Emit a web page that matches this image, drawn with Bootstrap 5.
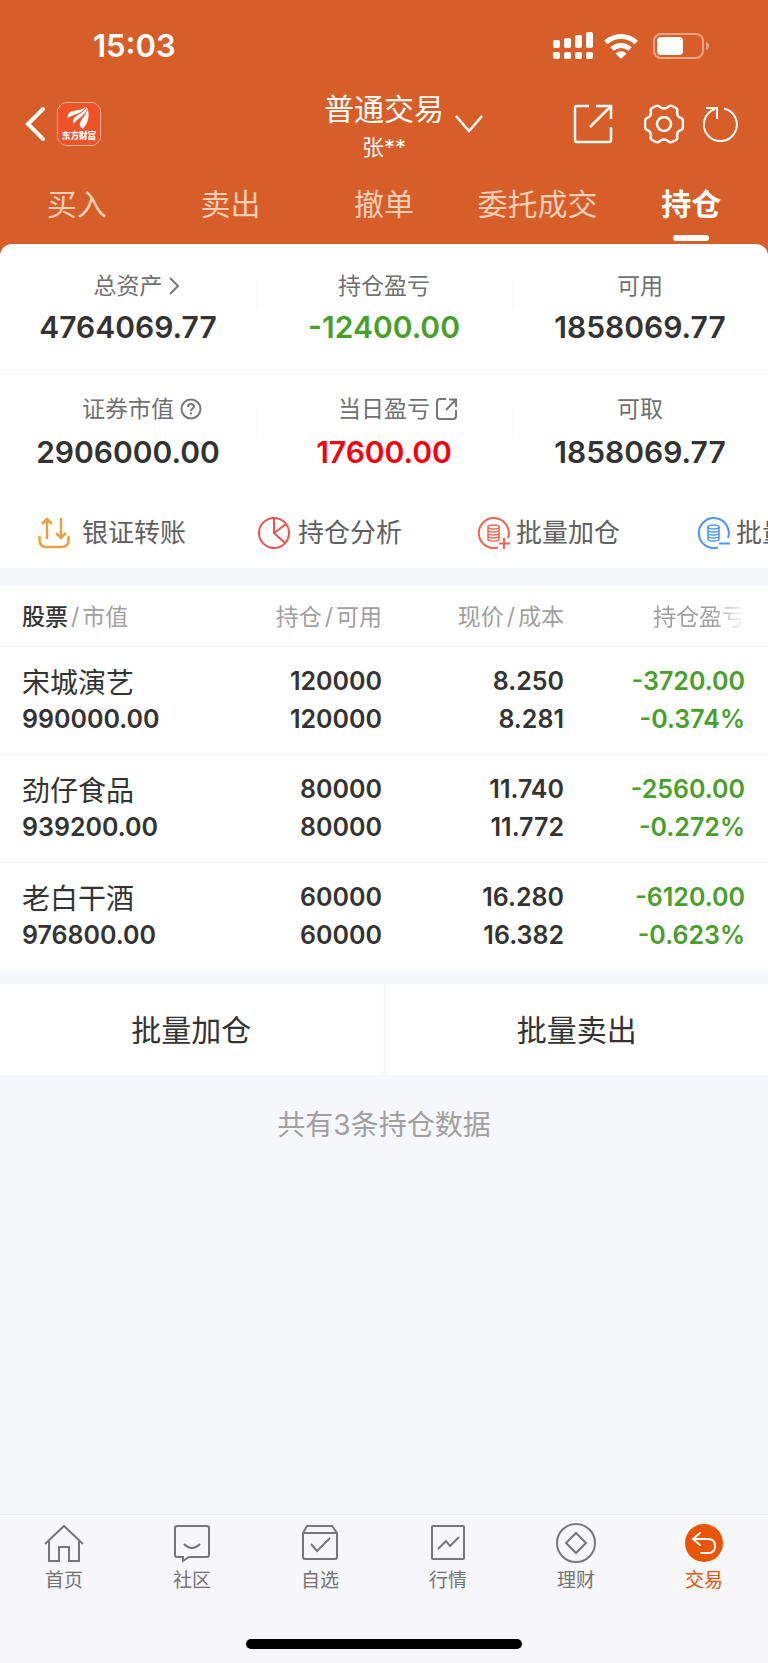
<!DOCTYPE html>
<html lang="zh-CN">
<head>
<meta charset="utf-8">
<meta name="viewport" content="width=device-width, initial-scale=1">
<title>普通交易 - 持仓</title>
<link href="https://cdn.jsdelivr.net/npm/bootstrap@5.3.0/dist/css/bootstrap.min.css" rel="stylesheet">
<style>
  :root { --brand: #d75e28; --page: #f6f7fa; --ink: #333; --line: #f5f5f7; --up: #f6000f; --down: #489f2c; }
  body { background: var(--page); color: var(--ink); font-family: Inter, "Noto Sans CJK SC", sans-serif; }
  svg { display: block; flex: none; }
  a { color: inherit; text-decoration: none; }
  button { color: inherit; background: none; border: 0; padding: 0; }

  .top-area { background: var(--brand); color: #fff; }
  .status-row { height: 90px; padding: 2px 59px 0 93px; }
  .clock { font-size: 31px; font-weight: 600; line-height: 40px; }
  .wifi { margin: 0 14px 0 6px; }
  .title-row { display: grid; grid-template-columns: 1fr auto 1fr; align-items: start; }
  .side-tools { height: 68px; }
  .back-btn { margin: 0 11px 0 24px; }
  .gear-btn { margin: 0 19px 0 31px; }
  .reload-btn { margin-right: 29px; }
  .title-main { font-size: 30px; line-height: 38px; }
  .title-sub { font-size: 22px; line-height: 38px; }
  .app-logo { border: 1px solid #f3b39b; border-radius: 10px; overflow: hidden; }
  .app-logo text { font: 900 9px "Noto Sans CJK SC", sans-serif; }
  .tab-link { padding-top: 18px; font-size: 30px; line-height: 40px; color: #f6cfb9; }
  .tab-link::after { content: ""; display: block; width: 36px; height: 6px; margin: 11px auto 3px; border-radius: 3px; }
  .tab-link.active { color: #fff; font-weight: 700; }
  .tab-link.active::after { background: #fff; }

  .sheet-wrap { background: var(--brand); }
  .sheet { background: #fff; border-radius: 12px 12px 0 0; padding-bottom: 15px; }
  .stat { padding-top: 26px; padding-bottom: 23px; background: no-repeat left 36px / 1px 28px; }
  .stat + .stat { background-image: linear-gradient(var(--line), var(--line)); }
  .stat-label { font-size: 23px; line-height: 32px; color: #707070; }
  .stat-value { font-size: 30px; line-height: 40px; font-weight: 600; margin-top: 5px; }
  .hang-icon { width: 28px; margin-right: -28px; padding-left: 6px; }
  .stats-first { border-bottom: 1px solid var(--line); }
  .stats-second .stat { padding-top: 22px; padding-bottom: 41px; }
  .stats-second .stat-value { margin-top: 7px; }
  .num-up { color: var(--up); }
  .num-down { color: var(--down); }

  .quick { padding-left: 38px; overflow: hidden; }
  .quick button { flex: 0 0 220px; font-size: 26px; line-height: 40px; color: #606060; white-space: nowrap; }
  .coin-icon { margin-right: 6px; }

  .hold { background: #fff; margin-top: 18px; table-layout: fixed; }
  .hold .col-stock { width: 26%; }
  .hold .col-price { width: 182px; }
  .hold .col-gain { width: 204px; }
  .hold th { font-size: 23px; line-height: 36px; font-weight: 400; color: #a0a0a0; padding: 13px 0 11px; white-space: nowrap; }
  .hold td { font-size: 25px; line-height: 38px; font-weight: 600; padding: 15px 0 16px; }
  .hold tr { border-bottom: 1px solid #f2f3f6; }
  .hold tbody tr:last-child { border-bottom: 0; }
  .hold th:first-child, .hold td:first-child { padding-left: 22px; }
  .hold th:last-child, .hold td:last-child { padding-right: 23px; }
  .hold .stock { font-size: 28px; font-weight: 400; line-height: 34px; padding-top: 4px; }
  .hold i { font-style: normal; padding: 0 3px; }
  .sort-key { color: var(--ink); font-weight: 500; }
  .fade-end { -webkit-mask-image: linear-gradient(90deg, #000 66%, transparent); mask-image: linear-gradient(90deg, #000 66%, transparent); }

  .batch { margin-top: 14px; gap: 3px; }
  .batch button { background: #fff; height: 91px; font-size: 30px; line-height: 40px; }
  .count-note { margin-top: 30px; font-size: 28px; line-height: 40px; color: #a0a0a0; }

  .dock { background: #f7f7fa; border-top: 1px solid #ededf0; padding-top: 8px; }
  .dock a { font-size: 19px; line-height: 28px; color: #737373; }
  .dock svg { margin: 0 auto 4px; }
  .dock a.active { color: #ea5504; }
  .home-bar { width: 36%; height: 10px; border-radius: 5px; background: #000; margin: 44px auto 14px; }
</style>
</head>
<body class="d-flex flex-column min-vh-100">

<header class="top-area">
  <div class="status-row d-flex align-items-center">
    <span class="clock me-auto">15:03</span>
    <svg width="40" height="28" viewBox="0 0 40 28" fill="#fff" aria-hidden="true">
      <rect x="0" y="20" width="7" height="7" rx="2"/><rect x="11" y="20" width="7" height="7" rx="2"/><rect x="22" y="20" width="7" height="7" rx="2"/><rect x="33" y="20" width="7" height="7" rx="2"/>
      <rect x="0" y="8" width="7" height="8" rx="2"/><rect x="11" y="6" width="7" height="10" rx="2"/><rect x="22" y="3" width="7" height="13" rx="2"/><rect x="33" y="0" width="7" height="16" rx="2"/>
    </svg>
    <svg class="wifi" width="40" height="26" viewBox="-5 0 40 26" fill="none" stroke="#fff" stroke-width="5" aria-hidden="true">
      <path d="M1.800 9.500a22 22 0 0 1 30.400 0"/><path d="M8 16a13 13 0 0 1 18 0"/><path d="M17 26l-5.500-5.500a8 8 0 0 1 11 0z" fill="#fff" stroke="none"/>
    </svg>
    <svg width="56" height="26" viewBox="0 0 56 26" aria-hidden="true">
      <rect x="1" y="1" width="49" height="24" rx="7" fill="none" stroke="#e9a583" stroke-width="2"/>
      <rect x="4" y="4" width="26" height="18" rx="4" fill="#fff"/><path d="M53 9q3 1 3 4t-3 4z" fill="#e9a583"/>
    </svg>
  </div>

  <div class="title-row">
    <div class="side-tools d-flex align-items-center">
      <button type="button" class="back-btn" aria-label="返回"><svg width="22" height="36" viewBox="0 0 22 36" fill="none" stroke="#fff" stroke-width="4"><path d="M19 3L4 18l15 15" stroke-linecap="round"/></svg></button>
      <svg class="app-logo" width="44" height="44" viewBox="0 0 44 44" role="img" aria-label="东方财富">
        <rect width="44" height="44" fill="#ee5428"/>
        <g fill="#fff"><path d="M10 16c0-4 1-6 4-7 6-2 11-1 15-5-3 7-11 7-19 12z"/><path d="M16 22c-1-4 0-6 4-9 5-3 8-4 10-9 1 8-7 10-14 18z"/><path d="M26 27c-4-3-4-6-1-10s6-7 5-13c4 8 2 17-4 23z"/></g>
        <text x="22" y="38" text-anchor="middle" fill="#fff">东方财富</text>
      </svg>
    </div>
    <div class="text-center">
      <div class="title-main">普通交易</div>
      <div class="title-sub">张**</div>
    </div>
    <div class="side-tools d-flex align-items-center">
      <button type="button" class="me-auto ps-2" aria-label="切换账户"><svg width="34" height="22" viewBox="-4 1 34 22" fill="none" stroke="#fff" stroke-width="2.500"><path d="M0 4l13 15L26 4"/></svg></button>
      <button type="button" aria-label="分享"><svg width="40" height="40" viewBox="0 0 40 40" fill="none" stroke="#fff" stroke-width="2.500"><path d="M16 2H4q-2 0-2 2v32q0 2 2 2h32q2 0 2-2V23M23 2h15v13M38 2L17 23"/></svg></button>
      <button type="button" class="gear-btn" aria-label="设置"><svg width="40" height="40" viewBox="0 0 40 40" fill="none" stroke="#fff" stroke-width="2.500" stroke-linejoin="round"><circle cx="20" cy="20" r="7"/><path d="M12 2q2-1 4 1 4 3 8 0 2-2 4-1l4 2q2 1 1 4 0 5 4 6 2 1 2 3v6q0 2-2 3-4 1-4 6 1 3-1 4l-4 2q-2 1-4-1-4-3-8 0-2 2-4 1l-4-2q-2-1-1-4 0-5-4-6-2-1-2-3v-6q0-2 2-3 4-1 4-6-1-3 1-4z"/></svg></button>
      <button type="button" class="reload-btn" aria-label="刷新"><svg width="36" height="36" viewBox="0 0 36 36" fill="none" stroke="#fff" stroke-width="2"><path d="M21 2.500A16.500 16.500 0 1 1 12 3M3 2h11v11"/></svg></button>
    </div>
  </div>

  <nav class="row row-cols-5 g-0 text-center">
    <a href="#" class="col tab-link">买入</a><a href="#" class="col tab-link">卖出</a><a href="#" class="col tab-link">撤单</a><a href="#" class="col tab-link">委托成交</a><a href="#" class="col tab-link active">持仓</a>
  </nav>
</header>

<main class="flex-grow-1">
  <div class="sheet-wrap">
  <section class="sheet">
    <div class="row row-cols-3 g-0 text-center stats-first">
      <div class="col stat">
        <div class="stat-label d-flex justify-content-center align-items-center">总资产<span class="hang-icon"><svg width="10" height="18" viewBox="0 0 10 18" fill="none" stroke="#777" stroke-width="2"><path d="M1 1l8 8-8 8"/></svg></span></div>
        <div class="stat-value">4764069.77</div>
      </div>
      <div class="col stat"><div class="stat-label">持仓盈亏</div><div class="stat-value num-down">-12400.00</div></div>
      <div class="col stat"><div class="stat-label">可用</div><div class="stat-value">1858069.77</div></div>
    </div>
    <div class="row row-cols-3 g-0 text-center stats-second">
      <div class="col stat">
        <div class="stat-label d-flex justify-content-center align-items-center">证券市值<span class="hang-icon"><svg width="22" height="22" viewBox="0 0 22 22" fill="none" stroke="#777" stroke-width="2"><circle cx="11" cy="11" r="9.500"/><path d="M8 9q0-3 3-3t3 2.500c0 2-3 2-3 4.500M11 14.500v2"/></svg></span></div>
        <div class="stat-value">2906000.00</div>
      </div>
      <div class="col stat">
        <div class="stat-label d-flex justify-content-center align-items-center">当日盈亏<span class="hang-icon"><svg width="22" height="22" viewBox="0 0 22 22" fill="none" stroke="#777" stroke-width="2"><path d="M10 1H4Q1 1 1 4v14q0 3 3 3h13q3 0 3-3v-6M13 1.500h7V9M20 1.500L10 12"/></svg></span></div>
        <div class="stat-value num-up">17600.00</div>
      </div>
      <div class="col stat"><div class="stat-label">可取</div><div class="stat-value">1858069.77</div></div>
    </div>
    <div class="quick d-flex">
      <button type="button" class="d-flex align-items-center"><svg class="me-2" width="36" height="32" viewBox="0 0 36 32" fill="none" stroke="#e9a040" stroke-width="2.500"><path d="M1.500 20v3q0 7 7 7h15q7 0 7-7v-3" stroke-linecap="round"/><path d="M9 22V2M4 7l5-5 5 5M23 1v20M18 16l5 5 5-5"/></svg>银证转账</button>
      <button type="button" class="d-flex align-items-center"><svg class="me-2" width="32" height="32" viewBox="0 0 32 32" fill="none" stroke="#ee5350" stroke-width="2"><circle cx="16" cy="16" r="15"/><path d="M16 1v15l11 10M16 16L28 7"/></svg>持仓分析</button>
      <button type="button" class="d-flex align-items-center"><svg class="coin-icon" width="32" height="32" viewBox="0 0 32 32" fill="none" stroke="#ee6650" stroke-width="2"><path d="M30 21A15 15 0 1 0 20 30.500"/><path d="M26 21v11M21 26.500h11"/><g stroke-width="1.500"><ellipse cx="15.500" cy="10" rx="5.500" ry="2"/><path d="M10 10v12q0 2 5.500 2t5.500-2V10M10 13q0 2 5.500 2t5.500-2M10 16q0 2 5.500 2t5.500-2M10 19q0 2 5.500 2t5.500-2"/></g></svg>批量加仓</button>
      <button type="button" class="d-flex align-items-center"><svg class="coin-icon" width="32" height="32" viewBox="0 0 32 32" fill="none" stroke="#4e95ee" stroke-width="2"><path d="M30 21A15 15 0 1 0 20 30.500"/><path d="M21 26.500h11"/><g stroke-width="1.500"><ellipse cx="15.500" cy="10" rx="5.500" ry="2"/><path d="M10 10v12q0 2 5.500 2t5.500-2V10M10 13q0 2 5.500 2t5.500-2M10 16q0 2 5.500 2t5.500-2M10 19q0 2 5.500 2t5.500-2"/></g></svg>批量卖出</button>
    </div>
  </section>
  </div>

  <table class="hold w-100">
    <colgroup><col class="col-stock"><col><col class="col-price"><col class="col-gain"></colgroup>
    <thead>
      <tr><th><span class="sort-key">股票</span><i>/</i>市值</th><th class="text-end">持仓<i>/</i>可用</th><th class="text-end">现价<i>/</i>成本</th><th class="text-end"><span class="fade-end">持仓盈亏</span></th></tr>
    </thead>
    <tbody>
      <tr><td><div class="stock">宋城演艺</div>990000.00</td><td class="text-end">120000<br>120000</td><td class="text-end">8.250<br>8.281</td><td class="text-end num-down">-3720.00<br>-0.374%</td></tr>
      <tr><td><div class="stock">劲仔食品</div>939200.00</td><td class="text-end">80000<br>80000</td><td class="text-end">11.740<br>11.772</td><td class="text-end num-down">-2560.00<br>-0.272%</td></tr>
      <tr><td><div class="stock">老白干酒</div>976800.00</td><td class="text-end">60000<br>60000</td><td class="text-end">16.280<br>16.382</td><td class="text-end num-down">-6120.00<br>-0.623%</td></tr>
    </tbody>
  </table>

  <div class="batch d-flex">
    <button type="button" class="flex-fill">批量加仓</button>
    <button type="button" class="flex-fill">批量卖出</button>
  </div>
  <p class="count-note text-center mb-0">共有3条持仓数据</p>
</main>

<footer class="dock">
  <nav class="row row-cols-6 g-0 text-center">
    <a href="#" class="col"><svg width="40" height="40" viewBox="0 0 40 40" fill="none" stroke="#777" stroke-width="2"><path d="M1 21L20 3l19 18M5 18v20h10V24h10v14h10V18"/></svg>首页</a>
    <a href="#" class="col"><svg width="40" height="40" viewBox="0 0 40 40" fill="none" stroke="#777" stroke-width="2"><path d="M5 3h30q2 0 2 2v27q0 2-2 2H17l-6 4v-4H5q-2 0-2-2V5q0-2 2-2zM12 21q8 8 16 0"/></svg>社区</a>
    <a href="#" class="col"><svg width="40" height="40" viewBox="0 0 40 40" fill="none" stroke="#777" stroke-width="2"><path d="M3 10l4-7h25l5 7v24q0 2-2 2H5q-2 0-2-2zM3 10h34M11 21l6 7 13-13"/></svg>自选</a>
    <a href="#" class="col"><svg width="40" height="40" viewBox="0 0 40 40" fill="none" stroke="#777" stroke-width="2"><rect x="4" y="3" width="32" height="33" rx="1"/><path d="M10 26l8-8 4 5 9-9"/></svg>行情</a>
    <a href="#" class="col"><svg width="40" height="40" viewBox="0 0 40 40" fill="none" stroke="#777" stroke-width="2"><circle cx="20" cy="20" r="19"/><path d="M20 10l10 10-10 10-10-10z"/></svg>理财</a>
    <a href="#" class="col active"><svg width="40" height="40" viewBox="0 0 40 40" fill="none" stroke="#fff" stroke-width="2"><circle cx="20" cy="20" r="19" fill="#ea5504" stroke="none"/><path d="M16 10l-7 6 7 6M9 16h15q7 0 7 7t-7 7h-7" stroke-linecap="round"/></svg>交易</a>
  </nav>
  <div class="home-bar"></div>
</footer>

<script src="https://cdn.jsdelivr.net/npm/bootstrap@5.3.0/dist/js/bootstrap.bundle.min.js"></script>
</body>
</html>
